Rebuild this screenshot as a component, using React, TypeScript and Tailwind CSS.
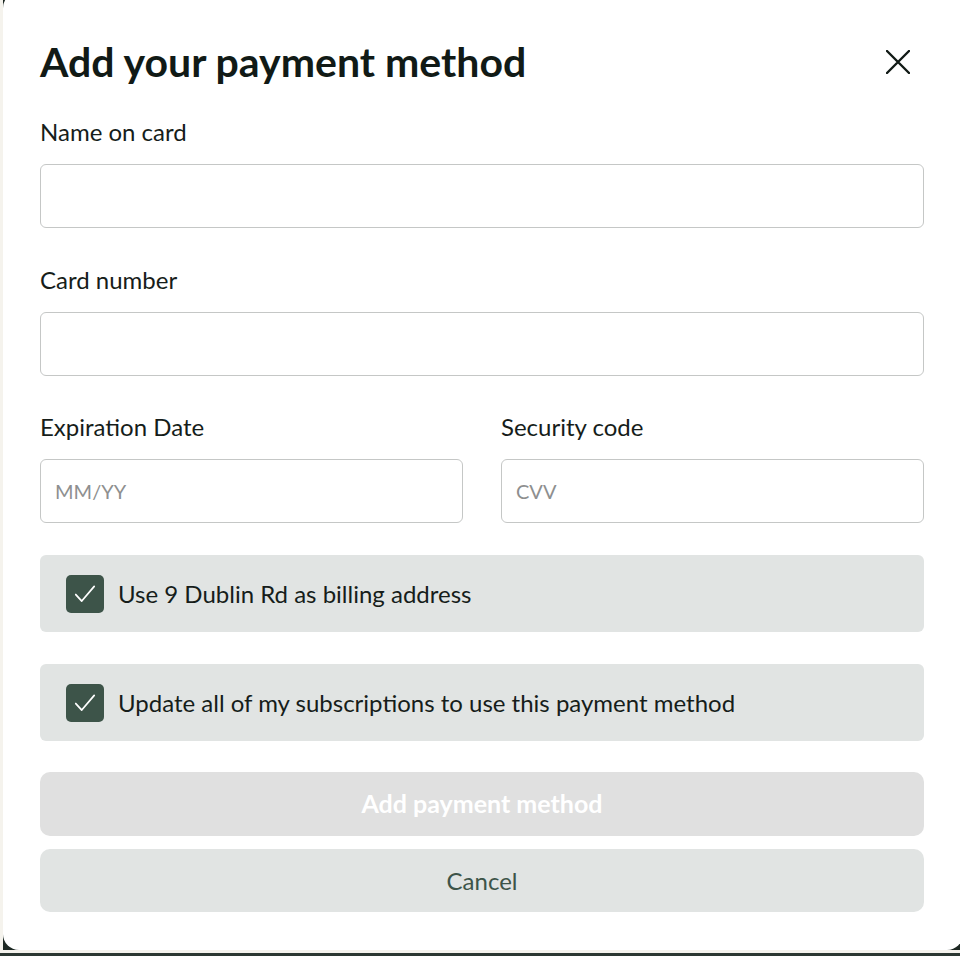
import { useState } from 'react';

const FONT = { fontFamily: 'Lato, "Noto Sans", sans-serif' };

function Field({ label, placeholder, className = '' }: { label: string; placeholder?: string; className?: string }) {
  return (
    <label className={`flex flex-1 flex-col gap-[17px] ${className}`}>
      <span className="text-[24px] leading-[30px] text-[#161d1a]">{label}</span>
      <input
        placeholder={placeholder}
        className="h-16 w-full rounded-md border border-[#c5c7c6] bg-white px-[14px] text-[20px] text-[#161d1a] outline-none placeholder:text-[#8e8f8f]"
        style={FONT}
      />
    </label>
  );
}

function CheckRow({ label }: { label: string }) {
  const [checked, setChecked] = useState(true);
  return (
    <button
      type="button"
      onClick={() => setChecked(!checked)}
      className="flex h-[77px] w-full items-center gap-[14px] rounded-md bg-[#e1e4e3] px-[26px] text-left"
    >
      <span
        className={`flex h-[38px] w-[38px] items-center justify-center rounded-[5px] ${
          checked ? 'bg-[#3d5449]' : 'border-2 border-[#3d5449] bg-white'
        }`}
      >
        {checked && (
          <svg viewBox="0 0 24 24" className="h-[26px] w-[26px]" fill="none" stroke="white" strokeWidth="1.6" strokeLinecap="round" strokeLinejoin="round">
            <path d="M3.5 12.5l5.5 6L20.5 5" />
          </svg>
        )}
      </span>
      <span className="text-[24px] leading-[30px] text-[#161d1a]">{label}</span>
    </button>
  );
}

export default function App() {
  return (
    <div className="relative h-[956px] w-[960px] overflow-hidden bg-[#f5f3ed]" style={FONT}>
      {/* Modal */}
      <div className="ml-[3px] mt-[-8px] h-[958px] w-[960px] bg-[#1d2823]">
        <div className="flex h-full flex-col rounded-2xl bg-white pl-[37px] pr-[39px] pt-[46px]">
          <div className="flex items-center justify-between">
            <h1 className="text-[41px] font-bold leading-[48px] text-[#111a16]">
              Add your payment method
            </h1>
            <button type="button" aria-label="Close" className="mr-[6px] flex h-10 w-10 items-center justify-center">
              <svg viewBox="0 0 24 24" className="h-6 w-6" fill="none" stroke="#111a16" strokeWidth="2.4" strokeLinecap="round">
                <path d="M1 1l22 22M23 1L1 23" />
              </svg>
            </button>
          </div>

          <div className="mt-[31px] flex flex-col gap-[36px]">
            <Field label="Name on card" />
            <Field label="Card number" className="mt-px" />
            <div className="flex gap-[38px]">
              <Field label="Expiration Date" placeholder="MM/YY" />
              <Field label="Security code" placeholder="CVV" />
            </div>
          </div>

          <div className="mt-8 flex flex-col gap-8">
            <CheckRow label="Use 9 Dublin Rd as billing address" />
            <CheckRow label="Update all of my subscriptions to use this payment method" />
          </div>

          <div className="mt-[31px] flex flex-col gap-[13px]">
            <button
              type="button"
              disabled
              className="h-16 w-full rounded-[10px] bg-[#e0e0e0] text-[25px] font-bold text-white"
            >
              Add payment method
            </button>
            <button
              type="button"
              className="h-[63px] w-full rounded-[10px] bg-[#e1e4e3] text-[24px] text-[#3d5449]"
            >
              Cancel
            </button>
          </div>
        </div>
      </div>
      {/* page content peeking below */}
      <div className="absolute inset-x-0 bottom-0 h-[3px] bg-[#2c3833]" />
    </div>
  );
}
